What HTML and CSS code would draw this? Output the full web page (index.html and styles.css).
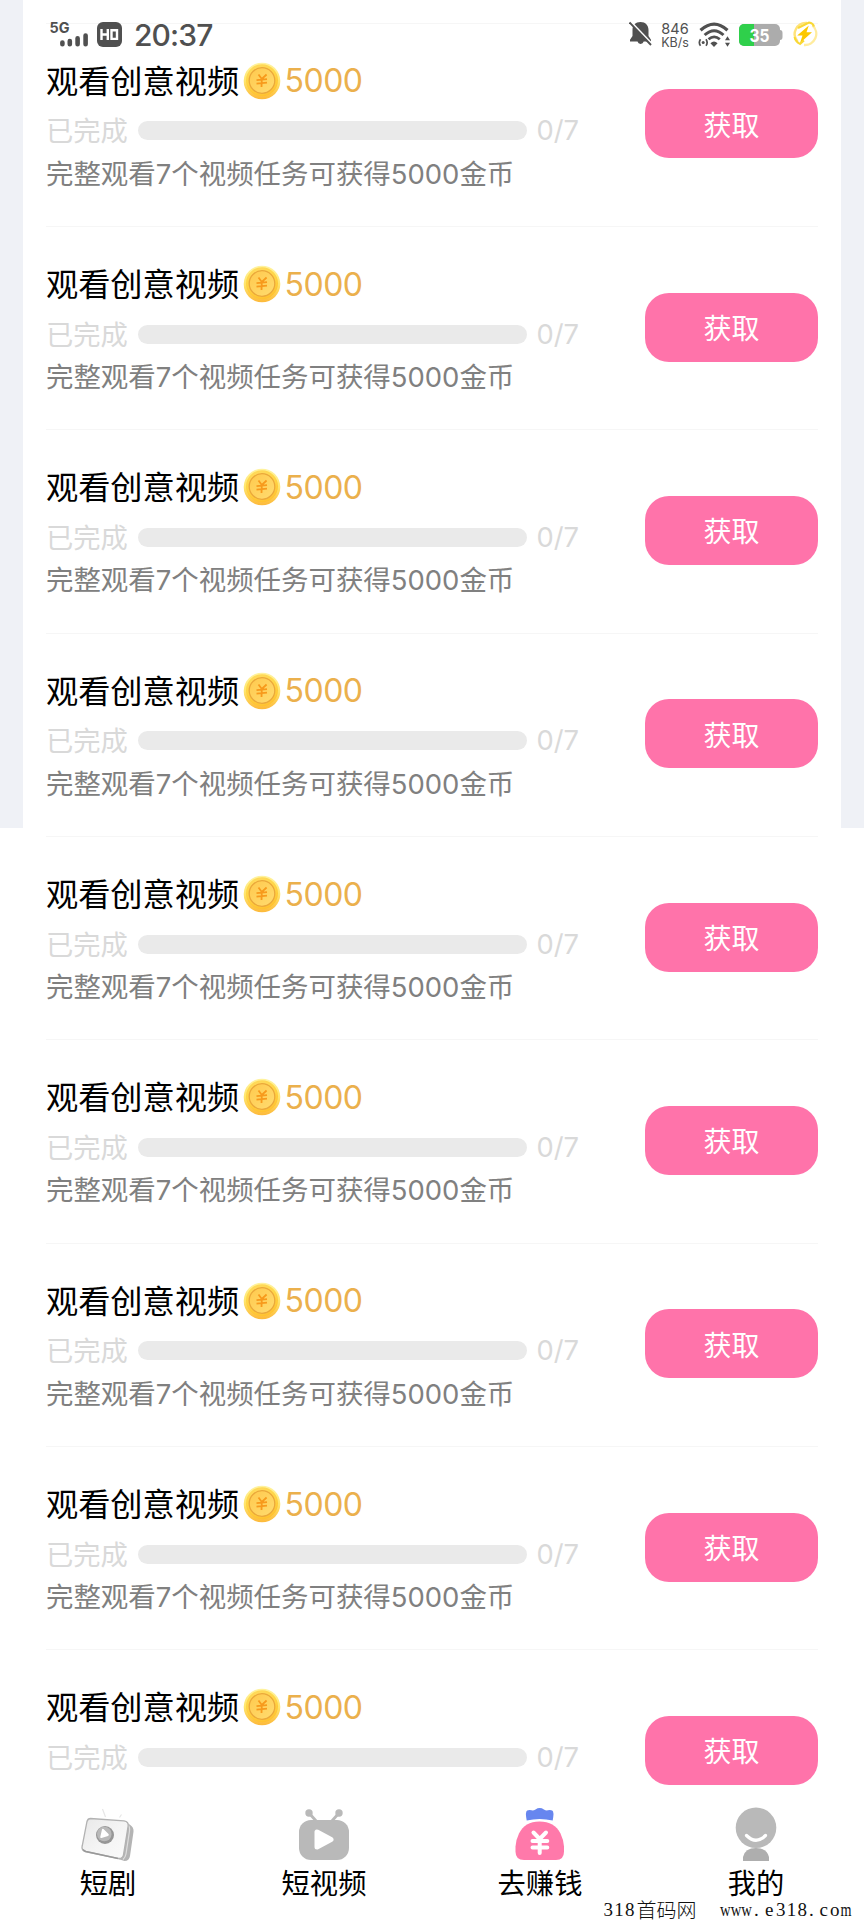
FILE: index.html
```html
<!DOCTYPE html>
<html lang="zh-CN">
<head>
<meta charset="utf-8">
<title>去赚钱</title>
<link rel="stylesheet" href="styles.css">
</head>
<body>
<svg class="defs" width="0" height="0" aria-hidden="true">
  <defs>
    <radialGradient id="coinRim" cx=".45" cy=".35" r=".65">
      <stop offset="0" stop-color="#ffe07a"/><stop offset=".7" stop-color="#ffd546"/><stop offset="1" stop-color="#ffc02e"/>
    </radialGradient>
    <linearGradient id="coinEdge" x1="0" y1="0" x2="0" y2="1">
      <stop offset="0" stop-color="#fff3a0"/><stop offset=".5" stop-color="#ffe56c"/><stop offset="1" stop-color="#fdb93a"/>
    </linearGradient>
    <linearGradient id="coinFace" x1="0" y1="0" x2="1" y2="1">
      <stop offset="0" stop-color="#ffc94d"/><stop offset="1" stop-color="#ffdc70"/>
    </linearGradient>
    <linearGradient id="face" x1="0" y1="0" x2="1" y2="1">
      <stop offset="0" stop-color="#e8e8e8"/><stop offset=".5" stop-color="#f4f4f4"/><stop offset="1" stop-color="#fafafa"/>
    </linearGradient>
    <symbol id="coin" viewBox="0 0 38 38">
      <circle cx="19" cy="19" r="18.300" fill="url(#coinEdge)"/>
      <circle cx="19" cy="18.200" r="16" fill="url(#coinRim)"/>
      <circle cx="19" cy="18.500" r="12.800" fill="url(#coinFace)" stroke="#eba83a" stroke-width="1.300"/>
      <path d="M15.500 12.500l3.300 4.500 4.800-4.500M18.800 17l-.3 8M13.500 18.200l10.500-1M13.500 21.700l10.500-1" fill="none" stroke="#f79a1c" stroke-width="1.800"/>
    </symbol>
  </defs>
</svg>
<div class="screen">
  <header class="status">
    <svg class="signal" width="38" height="28" viewBox="0 0 38 28">
      <text class="net" x="-.5" y="12" textLength="20" lengthAdjust="spacingAndGlyphs">5G</text>
      <path d="M12.400 21.500v1.800M19.800 20v3.300M27.600 17.200v6.100M35.600 14.600v8.700" stroke="#505050" stroke-width="4.600" stroke-linecap="round"/>
    </svg>
    <svg class="hd" width="25" height="25" viewBox="0 0 25 25">
      <rect width="25" height="25" rx="6" fill="#505050"/>
      <path d="M4.500 7v11M10.800 7v11M4.500 12.500h6.300M14.500 8.300h5.500v8.600h-5.500z" fill="none" stroke="#fff" stroke-width="2.400"/>
    </svg>
    <span class="time">20:37</span>
    <svg class="bell" width="23" height="26" viewBox="0 0 23 26">
      <path d="M11.500 1C6.500 1 3.500 4.500 3.500 9v6L1 18.800v1.700h7.500a3.200 3.200 0 0 0 6.200 0H22v-1.700L19.500 15V9c0-4.500-3-8-8-8z" fill="#505050"/>
      <path d="M1.500 .5L23 23" stroke="#fff" stroke-width="2"/>
      <path d="M.5 1.500L22 24" stroke="#505050" stroke-width="1.900"/>
    </svg>
    <span class="speed"><b>846</b><i>KB/s</i></span>
    <svg class="wifi" width="33" height="26" viewBox="0 0 33 26">
      <g fill="none" stroke="#505050">
        <path d="M2.500 8.200Q16.200-4 29.500 8.200" stroke-width="3.200"/>
        <path d="M6.600 13Q16.200 4.500 25.500 13" stroke-width="3"/>
        <path d="M10.500 17.300Q16.200 12.500 21.800 17.300" stroke-width="2.800"/>
        <path d="M2.500 17.200Q.2 20.500 2.500 23.800M8 17.200Q10.300 20.500 8 23.800" stroke-width="1.700"/>
      </g>
      <circle cx="5.200" cy="20.500" r="1.500" fill="#505050"/>
      <path d="M12.400 21.200Q16 18 19.600 21.200L16 25zM27 18.200l2.500-4 2.500 4zM27 20.800h5l-2.500 4z" fill="#505050"/>
    </svg>
    <svg class="battery" width="44" height="22" viewBox="0 0 44 22">
      <rect width="41" height="22" rx="5" fill="#acacac"/>
      <path d="M5 0h10v22H5a5 5 0 0 1-5-5V5a5 5 0 0 1 5-5z" fill="#2fd04b"/>
      <path d="M41 6q2.500 0 2.500 3v4q0 3-2.500 3z" fill="#acacac"/>
      <text class="pct" x="20.500" y="17.500" text-anchor="middle" textLength="20" lengthAdjust="spacingAndGlyphs">35</text>
    </svg>
    <svg class="bolt" width="26" height="26" viewBox="0 0 26 26">
      <path d="M15 2A11.200 11.200 0 0 0 5.500 20.500" fill="none" stroke="#ffe37a" stroke-width="2.400"/>
      <path d="M20.500 4.500A11.200 11.200 0 0 1 12 24" fill="none" stroke="#ffec9e" stroke-width="2.400"/>
      <path d="M6 7L17 1.500q4 .5 5 4" fill="none" stroke="#f9d836" stroke-width="2"/>
      <path d="M2.500 16q1 4.500 5.500 7l4-3.500" fill="none" stroke="#f9d836" stroke-width="2"/>
      <path d="M16.800 4.500L5.200 14.500h5.300L8 22 20 11.200h-5.500z" fill="#fcc800"/>
    </svg>
  </header>
  <main class="tasks" id="tasks"></main>
  <nav class="tabs">
    <a class="tab">
      <svg width="54" height="56" viewBox="0 0 54 56">
        <path d="M21.500 3l3 8M40.500 8.500l-2 3" stroke="#e6e6e6" stroke-width="1.200" fill="none"/>
        <path d="M44 15.500l5 3.200q4 2.500 3.500 7L49 50q-.8 5-5.500 5L37 53z" fill="#b4b4b4"/>
        <path d="M47 19q2 2 1.500 6L45 48q-.5 3-3 5.500" fill="none" stroke="#dedede" stroke-width="1.200"/>
        <path d="M9.500 12.500L43 14.800q5 .8 4 6l-4.500 28q-1 4.500-5.500 3.500L4 45.500Q.2 44 1.200 40L6 15.500q.8-3 3.500-3z" fill="url(#face)" stroke="#b2b2b2" stroke-width="1.300"/>
        <path d="M2 43.500q1 1.500 3 2L37 52.500" stroke="#999" stroke-width="1.500" fill="none"/>
        <circle cx="24" cy="29" r="9" fill="#969696"/>
        <circle cx="23.300" cy="28" r="7.300" fill="#b9b9b9"/>
        <path d="M21 23.500q.3-1.500 1.500-.4l5 5q1 1.200-.5 1.800l-6.500 2q-1.500.3-1.200-1.200z" fill="#fff"/>
      </svg>
      <span>短剧</span>
    </a>
    <a class="tab">
      <svg width="54" height="56" viewBox="0 0 54 56">
        <g fill="#b9b9b9">
          <circle cx="12" cy="7" r="3.700"/><circle cx="42" cy="7" r="3.700"/>
          <path d="M12 7l8 9M42 7l-8 9" stroke="#b9b9b9" stroke-width="2.800"/>
          <rect x="2" y="14" width="50" height="40" rx="12"/>
        </g>
        <path d="M20 26v15l14-7.500z" fill="#fff" stroke="#fff" stroke-width="5" stroke-linejoin="round"/>
      </svg>
      <span>短视频</span>
    </a>
    <a class="tab">
      <svg width="54" height="56" viewBox="0 0 54 56">
        <path d="M13.700 14.500Q12 5.500 14.200 4.500q2-1 4.300-.2 2 .5 4-.9Q24.500 2 26.700 2t4.200 1.400q2 1.400 4 .9 2.300-.8 4.300.2 2.200 1 .5 10Q26.700 11.500 13.700 14.500z" fill="#6786ef"/>
        <path d="M26.500 15.500c10 0 17 4 21 12q3 6 3.500 13v5q0 8.500-8 8.500H11q-8.500 0-8.500-8.500v-5q.5-7 3.500-13c4-8 10.500-12 20.500-12z" fill="#ff79aa"/>
        <path d="M20.500 26.500l6.200 6.500 6.300-6.500M26.700 33v14M19.500 35h14.800M19.500 41.500h14.800" fill="none" stroke="#fff" stroke-width="4" stroke-linecap="round"/>
      </svg>
      <span>去赚钱</span>
    </a>
    <a class="tab">
      <svg width="54" height="56" viewBox="0 0 54 56">
        <path d="M14 55V51q2-9 13-9t13 9v4z" fill="#aeaeae"/>
        <circle cx="27" cy="21.800" r="20.300" fill="#b9b9b9"/>
        <path d="M17.500 29.500q9.500 9.500 19 0" fill="none" stroke="#fff" stroke-width="3.200" stroke-linecap="round"/>
      </svg>
      <span>我的</span>
    </a>
  </nav>
  <svg class="mark" width="264" height="28" viewBox="0 0 264 28">
    <text x="3.500" y="20" textLength="31">318</text>
    <text class="cjk" x="36.500" y="21.500" textLength="60">首码网</text>
    <text x="120" y="20" textLength="32" lengthAdjust="spacingAndGlyphs">www</text>
    <text x="154" y="20">.</text>
    <text x="165" y="20">e</text>
    <text x="176" y="20" textLength="31">318</text>
    <text x="209" y="20">.</text>
    <text x="219.500" y="20">c</text>
    <text x="230" y="20">o</text>
    <text x="240.500" y="20" textLength="11" lengthAdjust="spacingAndGlyphs">m</text>
  </svg>
</div>
<script src="app.js"></script>
</body>
</html>
```
FILE: app.js
```js
const desc = '<div class="desc">完整观看7个视频任务可获得5000金币</div>';
const row = (last) => `
  <section class="task">
    <div class="info">
      <div class="title"><span class="name">观看创意视频</span><svg class="coin" width="38" height="38"><use href="#coin"/></svg><span class="amount">5000</span></div>
      <div class="progress"><span class="done">已完成</span><div class="bar"></div><span class="count">0/7</span></div>
      ${last ? '<div class="desc"></div>' : desc}
    </div>
    <button class="get">获取</button>
  </section>`;
document.getElementById('tasks').innerHTML =
  Array.from({ length: 9 }, (_, i) => row(i === 8)).join('');
```
FILE: styles.css
```css
* { box-sizing: border-box; }
body {
  margin: 0;
  background: #fff;
  font-family: Inter, "Noto Sans CJK SC", sans-serif;
}
.defs { position: absolute; }
.screen {
  position: relative;
  display: flex;
  flex-direction: column;
  width: 864px;
  height: 1920px;
  overflow: hidden;
  background: linear-gradient(#eff1f6, #eff1f6) 0 0 / 23px 828px no-repeat,
    linear-gradient(#eff1f6, #eff1f6) 841px 0 / 23px 828px no-repeat, #fff;
}
.status {
  position: absolute;
  top: 0;
  left: 0;
  width: 864px;
  height: 56px;
  padding: 21px 46px 0 50px;
  display: flex;
  align-items: flex-start;
  color: #505050;
}
.net { font: 700 14.500px Inter, sans-serif; fill: #505050; }
.hd { margin: 1px 0 0 9px; }
.time { margin: -2px 0 0 12px; font-size: 30px; font-weight: 500; line-height: 32px; letter-spacing: -.9px; }
.bell { margin-left: auto; }
.speed { display: flex; flex-direction: column; align-items: center; width: 28px; margin: 1px 9px 0 9px; white-space: nowrap; }
.speed b { font-size: 14.500px; font-weight: 400; line-height: 14px; }
.speed i { font-style: normal; font-size: 12.500px; font-weight: 400; line-height: 13px; }
.wifi { margin-right: 8px; margin-top: 1px; }
.battery { margin: 3px 9px 0 0; }
.pct { font: 700 17.500px Inter, sans-serif; fill: #fff; }
.tasks {
  flex: none;
  height: 1787px;
  padding: 22.670px 46px 0;
  overflow: hidden;
}
.task {
  display: flex;
  align-items: center;
  justify-content: space-between;
  height: 203.333px;
  border-top: 1px solid #f6f6f6;
}
.info { width: 536px; white-space: nowrap; }
.title { display: flex; align-items: center; height: 50px; }
.name { width: 197px; padding-bottom: 4px; font-size: 32.200px; color: #000; }
.coin { flex: none; }
.amount { margin-left: 3.500px; font-size: 32px; letter-spacing: -.5px; color: #ebb04c; }
.progress { display: flex; align-items: center; height: 50px; font-size: 27.300px; color: #d9d9d9; }
.done { width: 92px; padding-bottom: 3px; }
.bar { width: 389px; height: 19px; border-radius: 10px; background: #eaeaea; }
.count { margin-left: 9.500px; }
.desc { height: 38px; line-height: 37px; font-size: 27.450px; color: #808080; }
.get {
  width: 173px;
  height: 69px;
  margin-bottom: 2px;
  padding: 0;
  border: 0;
  border-radius: 24px;
  background: #ff73aa;
  color: #fff;
  font: 400 28px/64px "Noto Sans CJK SC", sans-serif;
}
.tabs { display: grid; grid-template-columns: repeat(4, 1fr); height: 133px; padding-top: 19px; background: #fff; }
.tab { display: flex; flex-direction: column; align-items: center; font-size: 28.300px; line-height: 40px; color: #000; }
.tab span { margin-top: 2px; }
.mark { position: absolute; right: 0; bottom: -4px; }
.mark text { font: 19px "Liberation Serif", serif; fill: #111; }
.mark .cjk { font: 300 20px "Noto Sans CJK SC", sans-serif; }
```
